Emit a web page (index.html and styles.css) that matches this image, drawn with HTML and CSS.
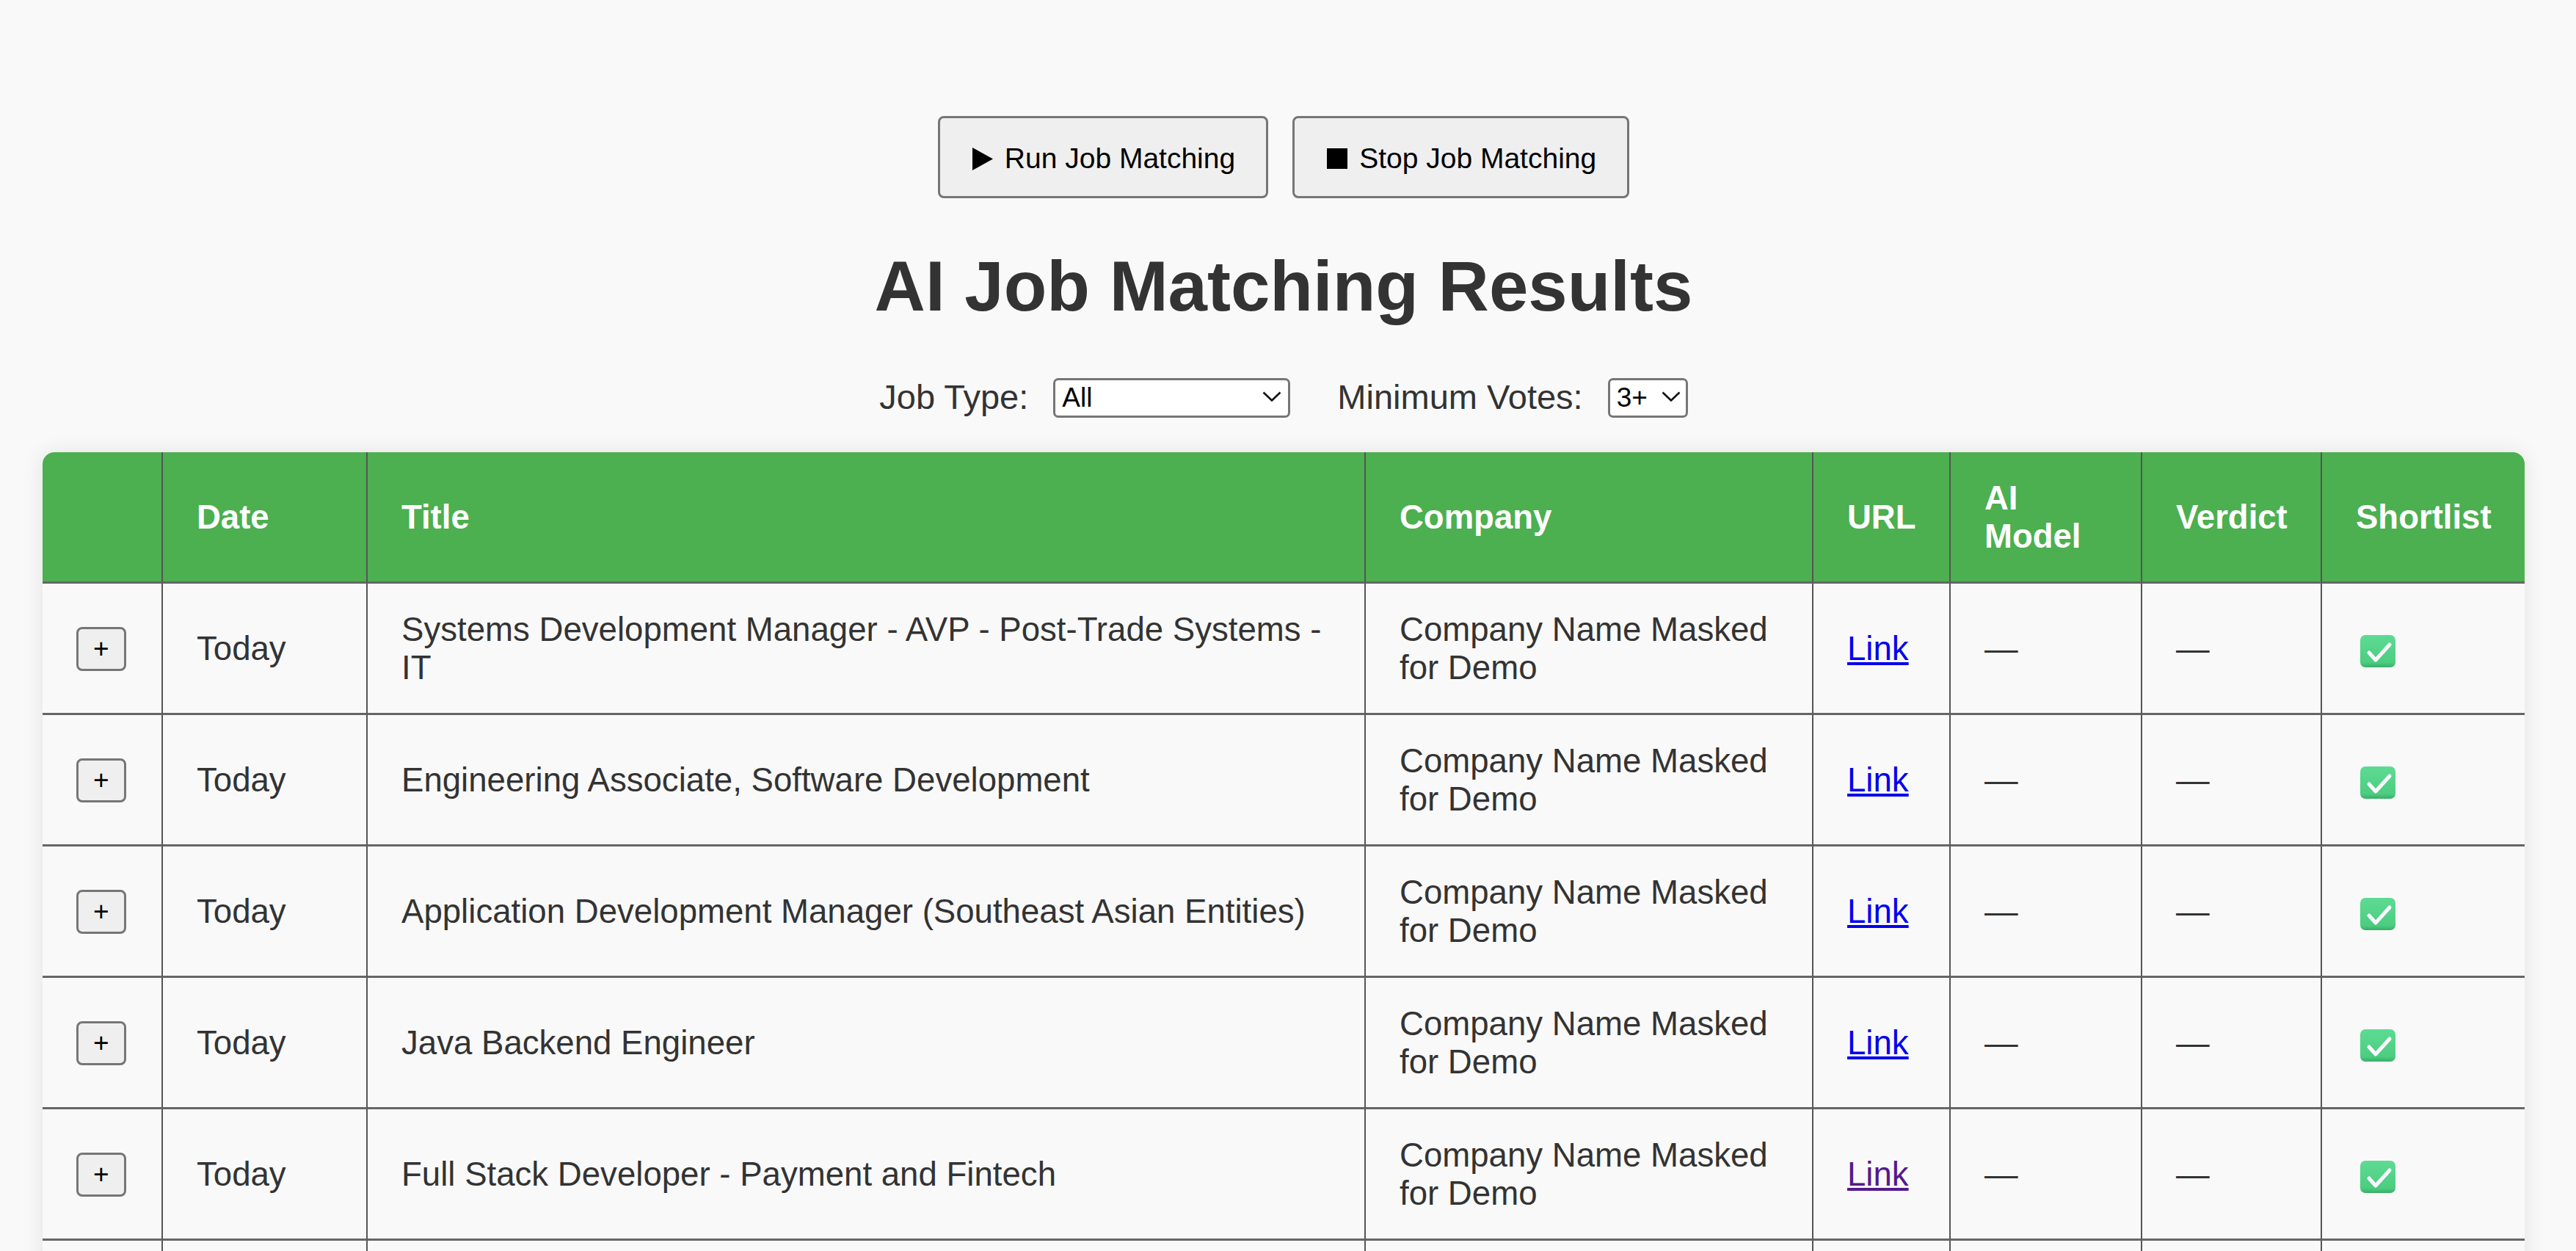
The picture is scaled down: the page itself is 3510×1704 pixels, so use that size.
FILE: index.html
```html
<!DOCTYPE html>
<html lang="en">
<head>
<meta charset="utf-8">
<title>AI Job Matching Results</title>
<link rel="stylesheet" href="styles.css">
</head>
<body>
<main class="page">
  <div class="actions">
    <button class="action-btn" type="button">
      <svg class="btn-icon" width="28" height="31" viewBox="0 0 28 31" aria-hidden="true"><path d="M0 0 L28 15.5 L0 31 Z" fill="#000"/></svg>
      <span>Run Job Matching</span>
    </button>
    <button class="action-btn" type="button">
      <svg class="btn-icon" width="28" height="28" viewBox="0 0 28 28" aria-hidden="true"><rect x="0" y="0" width="28" height="28" fill="#000"/></svg>
      <span>Stop Job Matching</span>
    </button>
  </div>

  <h1 class="title">AI Job Matching Results</h1>

  <div class="filters">
    <label class="filter-label" for="job-type">Job Type:</label>
    <span class="select-wrap select-gap">
      <select id="job-type" class="filter-select select-job">
        <option>All</option>
        <option>Full-time</option>
        <option>Contract</option>
        <option>Internship</option>
      </select>
      <svg class="chevron chevron-job" width="26" height="14" viewBox="0 0 26 14" aria-hidden="true"><polyline points="1.5,1.5 13,12.5 24.5,1.5" fill="none" stroke="#111" stroke-width="2.6"/></svg>
    </span>
    <label class="filter-label" for="min-votes">Minimum Votes:</label>
    <span class="select-wrap">
      <select id="min-votes" class="filter-select select-votes">
        <option>1+</option>
        <option>2+</option>
        <option selected>3+</option>
      </select>
      <svg class="chevron chevron-votes" width="26" height="14" viewBox="0 0 26 14" aria-hidden="true"><polyline points="1.5,1.5 13,12.5 24.5,1.5" fill="none" stroke="#111" stroke-width="2.6"/></svg>
    </span>
  </div>

  <div class="table-card">
    <table class="results">
      <thead>
        <tr>
          <th class="col-expand"></th>
          <th class="col-date">Date</th>
          <th class="col-title">Title</th>
          <th class="col-company">Company</th>
          <th class="col-url">URL</th>
          <th class="col-model">AI Model</th>
          <th class="col-verdict">Verdict</th>
          <th class="col-short">Shortlist</th>
        </tr>
      </thead>
      <tbody>
        <tr>
          <td><button class="expand-btn" type="button">+</button></td>
          <td>Today</td>
          <td>Systems Development Manager - AVP - Post-Trade Systems - IT</td>
          <td>Company Name Masked for Demo</td>
          <td><a class="link" href="#job1">Link</a></td>
          <td>—</td>
          <td>—</td>
          <td><svg class="check" width="50" height="46" viewBox="0 0 50 46" aria-hidden="true"><defs><linearGradient id="g1" x1="0" y1="0" x2="0" y2="1"><stop offset="0" stop-color="#5edb93"/><stop offset="0.85" stop-color="#4ccd80"/><stop offset="1" stop-color="#39ae67"/></linearGradient></defs><rect x="1" y="1" width="48" height="44" rx="7" fill="url(#g1)"/><path d="M13 25 L22 35 L41 14" fill="none" stroke="#fbf8ff" stroke-width="5" stroke-linecap="round" stroke-linejoin="round"/></svg></td>
        </tr>
        <tr>
          <td><button class="expand-btn" type="button">+</button></td>
          <td>Today</td>
          <td>Engineering Associate, Software Development</td>
          <td>Company Name Masked for Demo</td>
          <td><a class="link" href="#job2">Link</a></td>
          <td>—</td>
          <td>—</td>
          <td><svg class="check" width="50" height="46" viewBox="0 0 50 46" aria-hidden="true"><defs><linearGradient id="g2" x1="0" y1="0" x2="0" y2="1"><stop offset="0" stop-color="#5edb93"/><stop offset="0.85" stop-color="#4ccd80"/><stop offset="1" stop-color="#39ae67"/></linearGradient></defs><rect x="1" y="1" width="48" height="44" rx="7" fill="url(#g2)"/><path d="M13 25 L22 35 L41 14" fill="none" stroke="#fbf8ff" stroke-width="5" stroke-linecap="round" stroke-linejoin="round"/></svg></td>
        </tr>
        <tr>
          <td><button class="expand-btn" type="button">+</button></td>
          <td>Today</td>
          <td>Application Development Manager (Southeast Asian Entities)</td>
          <td>Company Name Masked for Demo</td>
          <td><a class="link" href="#job3">Link</a></td>
          <td>—</td>
          <td>—</td>
          <td><svg class="check" width="50" height="46" viewBox="0 0 50 46" aria-hidden="true"><defs><linearGradient id="g3" x1="0" y1="0" x2="0" y2="1"><stop offset="0" stop-color="#5edb93"/><stop offset="0.85" stop-color="#4ccd80"/><stop offset="1" stop-color="#39ae67"/></linearGradient></defs><rect x="1" y="1" width="48" height="44" rx="7" fill="url(#g3)"/><path d="M13 25 L22 35 L41 14" fill="none" stroke="#fbf8ff" stroke-width="5" stroke-linecap="round" stroke-linejoin="round"/></svg></td>
        </tr>
        <tr>
          <td><button class="expand-btn" type="button">+</button></td>
          <td>Today</td>
          <td>Java Backend Engineer</td>
          <td>Company Name Masked for Demo</td>
          <td><a class="link" href="#job4">Link</a></td>
          <td>—</td>
          <td>—</td>
          <td><svg class="check" width="50" height="46" viewBox="0 0 50 46" aria-hidden="true"><defs><linearGradient id="g4" x1="0" y1="0" x2="0" y2="1"><stop offset="0" stop-color="#5edb93"/><stop offset="0.85" stop-color="#4ccd80"/><stop offset="1" stop-color="#39ae67"/></linearGradient></defs><rect x="1" y="1" width="48" height="44" rx="7" fill="url(#g4)"/><path d="M13 25 L22 35 L41 14" fill="none" stroke="#fbf8ff" stroke-width="5" stroke-linecap="round" stroke-linejoin="round"/></svg></td>
        </tr>
        <tr>
          <td><button class="expand-btn" type="button">+</button></td>
          <td>Today</td>
          <td>Full Stack Developer - Payment and Fintech</td>
          <td>Company Name Masked for Demo</td>
          <td><a class="link link-visited" href="#job5">Link</a></td>
          <td>—</td>
          <td>—</td>
          <td><svg class="check" width="50" height="46" viewBox="0 0 50 46" aria-hidden="true"><defs><linearGradient id="g5" x1="0" y1="0" x2="0" y2="1"><stop offset="0" stop-color="#5edb93"/><stop offset="0.85" stop-color="#4ccd80"/><stop offset="1" stop-color="#39ae67"/></linearGradient></defs><rect x="1" y="1" width="48" height="44" rx="7" fill="url(#g5)"/><path d="M13 25 L22 35 L41 14" fill="none" stroke="#fbf8ff" stroke-width="5" stroke-linecap="round" stroke-linejoin="round"/></svg></td>
        </tr>
        <tr>
          <td><button class="expand-btn" type="button">+</button></td>
          <td>Today</td>
          <td>Senior Software Engineer</td>
          <td>Company Name Masked for Demo</td>
          <td><a class="link" href="#job6">Link</a></td>
          <td>—</td>
          <td>—</td>
          <td><svg class="check" width="50" height="46" viewBox="0 0 50 46" aria-hidden="true"><defs><linearGradient id="g6" x1="0" y1="0" x2="0" y2="1"><stop offset="0" stop-color="#5edb93"/><stop offset="0.85" stop-color="#4ccd80"/><stop offset="1" stop-color="#39ae67"/></linearGradient></defs><rect x="1" y="1" width="48" height="44" rx="7" fill="url(#g6)"/><path d="M13 25 L22 35 L41 14" fill="none" stroke="#fbf8ff" stroke-width="5" stroke-linecap="round" stroke-linejoin="round"/></svg></td>
        </tr>
      </tbody>
    </table>
  </div>
</main>
</body>
</html>
```

FILE: styles.css
```css
html, body {
  margin: 0;
  background: #f9f9f9;
}

body {
  font-family: "Liberation Sans", Arial, sans-serif;
  font-size: 45px;
  color: #333;
}

.page {
  display: flex;
  flex-direction: column;
  align-items: center;
  padding: 158px 70px 60px 58px;
}

.actions {
  display: flex;
  gap: 33px;
}

.action-btn {
  display: inline-flex;
  align-items: center;
  gap: 16px;
  box-sizing: border-box;
  height: 112px;
  padding: 4px 42px 0 44px;
  font-family: "Liberation Sans", Arial, sans-serif;
  font-size: 39px;
  color: #000;
  background: #efefef;
  border: 3px solid #767676;
  border-radius: 8px;
}

.btn-icon {
  display: block;
  flex: none;
}

.title {
  margin: 65px 0 0;
  font-size: 96px;
  font-weight: bold;
  line-height: normal;
  color: #333;
}

.filters {
  display: flex;
  align-items: center;
  height: 54px;
  margin-top: 68px;
}

.filter-label {
  margin-right: 34px;
  font-size: 47px;
  color: #333;
}

.select-wrap {
  position: relative;
  display: inline-block;
  height: 54px;
}

.select-gap {
  margin-right: 64px;
}

.filter-select {
  -webkit-appearance: none;
  appearance: none;
  box-sizing: border-box;
  height: 54px;
  margin: 0;
  padding: 0 0 0 9px;
  font-family: "Liberation Sans", Arial, sans-serif;
  font-size: 37px;
  color: #000;
  background: #fff;
  border: 3px solid #767676;
  border-radius: 7px;
}

.select-job {
  width: 323px;
}

.select-votes {
  width: 109px;
}

.chevron {
  position: absolute;
  top: 20px;
  pointer-events: none;
}

.chevron-job {
  right: 12px;
}

.chevron-votes {
  right: 10px;
}

.table-card {
  width: 3382px;
  margin-top: 49px;
  background: #f9f9f9;
  border-radius: 16px;
  overflow: hidden;
  box-shadow: 0 0 30px rgba(0, 0, 0, 0.09);
}

.results {
  width: 100%;
  table-layout: fixed;
  border-collapse: separate;
  border-spacing: 0;
}

.results th,
.results td {
  box-sizing: border-box;
  padding: 37px 46px 35px;
  text-align: left;
  vertical-align: middle;
  line-height: normal;
  border-right: 2px solid #555;
  border-bottom: 3px solid #666;
}

.results th:last-child,
.results td:last-child {
  border-right: none;
}

.results th {
  padding-right: 40px;
  font-size: 45.5px;
  background: #4caf50;
  color: #fff;
  font-weight: bold;
}

.results td {
  font-size: 45.6px;
  color: #333;
}

.col-expand { width: 164px; }
.col-date { width: 279px; }
.col-title { width: 1360px; }
.col-company { width: 610px; }
.col-url { width: 187px; }
.col-model { width: 261px; }
.col-verdict { width: 245px; }
.col-short { width: 276px; }

.expand-btn {
  display: block;
  padding: 6px 20px;
  font-family: "Liberation Sans", Arial, sans-serif;
  font-size: 37px;
  line-height: normal;
  color: #000;
  background: #efefef;
  border: 3px solid #767676;
  border-radius: 8px;
}

.link {
  color: #0000ee;
  text-decoration: underline;
}

.link-visited {
  color: #551a8b;
}

.check {
  display: block;
  margin: 6px 0 0 5px;
}
```
